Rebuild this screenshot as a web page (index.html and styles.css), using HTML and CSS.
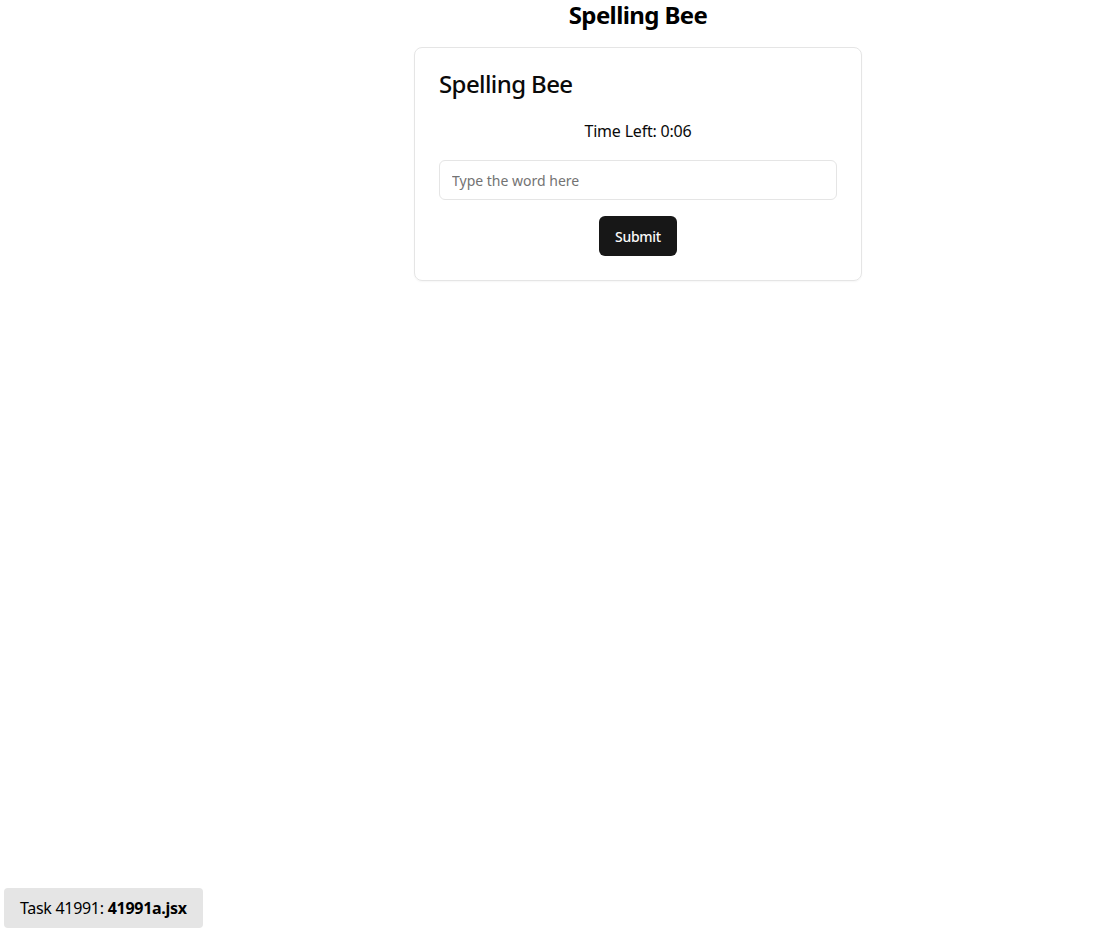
FILE: index.html
```html
<!DOCTYPE html>
<html>
<head>
<meta charset="utf-8">
<link rel="stylesheet" href="styles.css">
</head>
<body>
<div class="page">
  <h1 class="page-title">Spelling Bee</h1>
  <div class="card">
    <div class="card-header">
      <h2 class="card-title">Spelling Bee</h2>
    </div>
    <div class="card-content">
      <p class="timer">Time Left: 0:06</p>
      <input class="word-input" type="text" placeholder="Type the word here">
      <div class="actions"><button class="submit">Submit</button></div>
    </div>
  </div>
</div>
<div class="badge">Task 41991: <b>41991a.jsx</b></div>
</body>
</html>
```
FILE: styles.css
```css
* { box-sizing: border-box; }
html, body { margin: 0; padding: 0; background: #fff; }
body {
  font-family: "Noto Sans", "DejaVu Sans", sans-serif;
  color: #0a0a0a;
  height: 938px;
  position: relative;
}
.page {
  padding-left: 160px;
  display: flex;
  flex-direction: column;
  align-items: center;
}
.page-title {
  margin: 0 0 17px;
  font-size: 24px;
  line-height: 30px;
  font-weight: 700;
  letter-spacing: -0.6px;
  color: #000;
}
.card {
  width: 448px;
  border: 1px solid #e5e5e5;
  border-radius: 8px;
  box-shadow: 0 1px 2px rgba(0,0,0,0.04);
}
.card-header { padding: 24px; }
.card-title {
  margin: 0;
  font-size: 24px;
  line-height: 24px;
  font-weight: 500;
  letter-spacing: -0.6px;
  color: #0a0a0a;
}
.card-content {
  padding: 0 24px 24px;
  display: flex;
  flex-direction: column;
  gap: 16px;
}
.timer {
  margin: 0;
  text-align: center;
  font-size: 16px;
  line-height: 22px;
  padding-bottom: 2px;
  letter-spacing: -0.2px;
}
.word-input {
  width: 100%;
  height: 40px;
  border: 1px solid #e5e5e5;
  border-radius: 6px;
  padding: 0 12px;
  font-family: inherit;
  font-size: 14px;
  color: #0a0a0a;
  outline: none;
}
.word-input::placeholder { color: #737373; }
.actions { display: flex; justify-content: center; }
.submit {
  height: 40px;
  padding: 0 16px;
  background: #171717;
  color: #fafafa;
  border: none;
  border-radius: 6px;
  font-family: inherit;
  font-size: 14px;
  font-weight: 500;
  letter-spacing: -0.3px;
}
.badge {
  position: absolute;
  left: 4px;
  top: 888px;
  height: 40px;
  padding: 0 16px;
  display: flex;
  align-items: center;
  gap: 4px;
  background: #e5e5e5;
  border-radius: 4px;
  font-size: 16px;
  letter-spacing: -0.3px;
  color: #000;
}
.badge b { font-weight: 700; }
```
